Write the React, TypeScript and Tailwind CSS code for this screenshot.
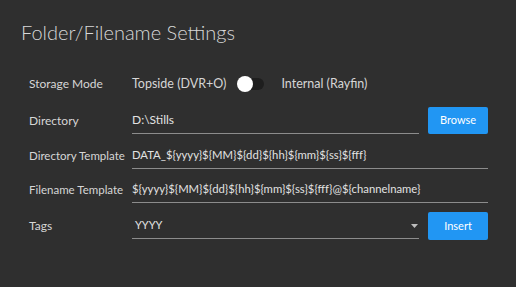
export default function App() {
  const font = { fontFamily: 'Lato, "Noto Sans", sans-serif' };
  return (
    <div className="w-[516px] h-[287px] bg-[#2f2f2f] text-[#d6d6d6] overflow-hidden" style={font}>
      <h1 className="pl-[21px] pt-[18px] text-[20px] font-light leading-[28px] text-[#d8d8d8] whitespace-nowrap">
        Folder/Filename Settings
      </h1>

      <div className="pl-[29px] pr-[28px] mt-[25px] flex flex-col text-[12px] whitespace-nowrap">
        {/* storage mode */}
        <div className="flex items-center h-[26px]">
          <div className="w-[103px]">Storage Mode</div>
          <span className="text-[12.5px]">Topside (DVR+O)</span>
          <div className="relative ml-[11px] w-[27px] h-[16px] flex items-center">
            <div className="absolute left-[6px] w-[21px] h-[12px] rounded-full bg-[#1e1e1e]" />
            <div className="absolute left-0 w-[16px] h-[16px] rounded-full bg-white" />
          </div>
          <span className="ml-[17px] text-[12.5px]">Internal (Rayfin)</span>
        </div>

        {/* directory */}
        <div className="flex items-center mt-[10px]">
          <div className="w-[103px]">Directory</div>
          <div className="w-[287px] h-[26px] flex items-center border-b border-[#8c8c8c] text-[#e2e2e2]">D:\Stills</div>
          <button className="ml-[9px] w-[60px] h-[27px] rounded-[2px] bg-[#2196f3] text-white text-[11px]">Browse</button>
        </div>

        {/* directory template */}
        <div className="flex items-center mt-[9px]">
          <div className="w-[103px] text-[11.5px]">Directory Template</div>
          <div className="flex-1 h-[26px] flex items-center border-b border-[#8c8c8c] text-[#e2e2e2] text-[11.3px]">
            DATA_${"{yyyy}"}${"{MM}"}${"{dd}"}${"{hh}"}${"{mm}"}${"{ss}"}${"{fff}"}
          </div>
        </div>

        {/* filename template */}
        <div className="flex items-center mt-[8px]">
          <div className="w-[103px] text-[11.5px]">Filename Template</div>
          <div className="flex-1 h-[26px] flex items-center border-b border-[#8c8c8c] text-[#e2e2e2] text-[11.3px]">
            ${"{yyyy}"}${"{MM}"}${"{dd}"}${"{hh}"}${"{mm}"}${"{ss}"}${"{fff}"}@${"{channelname}"}
          </div>
        </div>

        {/* tags */}
        <div className="flex items-center mt-[9px]">
          <div className="w-[103px]">Tags</div>
          <div className="w-[287px] h-[26px] flex items-center justify-between border-b border-[#8c8c8c] text-[#e2e2e2]">
            <span className="pl-[3px] text-[11px]">YYYY</span>
            <svg width="7" height="4" viewBox="0 0 7 4" className="mr-[1px]">
              <path d="M0 0 L7 0 L3.5 4 Z" fill="#bdbdbd" />
            </svg>
          </div>
          <button className="ml-[9px] w-[60px] h-[28px] rounded-[2px] bg-[#2196f3] text-white text-[11px]">Insert</button>
        </div>
      </div>
    </div>
  );
}
